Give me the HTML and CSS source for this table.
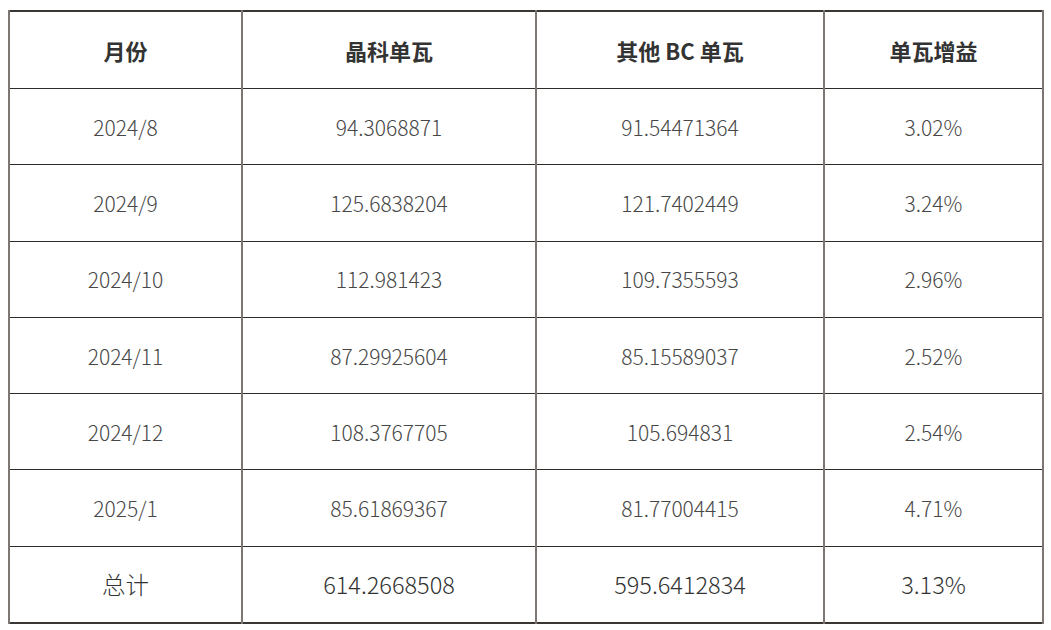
FILE: index.html
```html
<!DOCTYPE html>
<html lang="zh-CN">
<head>
<meta charset="utf-8">
<link rel="stylesheet" href="styles.css">
</head>
<body>
<table class="data">
  <colgroup>
    <col class="c1"><col class="c2"><col class="c3"><col class="c4">
  </colgroup>
  <thead>
    <tr><th>月份</th><th>晶科单瓦</th><th>其他 BC 单瓦</th><th>单瓦增益</th></tr>
  </thead>
  <tbody>
    <tr><td>2024/8</td><td>94.3068871</td><td>91.54471364</td><td>3.02%</td></tr>
    <tr><td>2024/9</td><td>125.6838204</td><td>121.7402449</td><td>3.24%</td></tr>
    <tr><td>2024/10</td><td>112.981423</td><td>109.7355593</td><td>2.96%</td></tr>
    <tr><td>2024/11</td><td>87.29925604</td><td>85.15589037</td><td>2.52%</td></tr>
    <tr><td>2024/12</td><td>108.3767705</td><td>105.694831</td><td>2.54%</td></tr>
    <tr><td>2025/1</td><td>85.61869367</td><td>81.77004415</td><td>4.71%</td></tr>
    <tr class="total"><td>总计</td><td>614.2668508</td><td>595.6412834</td><td>3.13%</td></tr>
  </tbody>
</table>
</body>
</html>
```
FILE: styles.css
```css
html, body {
  margin: 0;
  padding: 0;
  background: #ffffff;
}
body {
  padding: 10px 0 0 8px;
  font-family: "Noto Sans CJK SC", "Noto Sans", sans-serif;
}
.data {
  border-collapse: collapse;
  width: 1034px;
  table-layout: fixed;
  border: 2px solid #3a3633;
}
.c1 { width: 233px; }
.c2 { width: 294px; }
.c3 { width: 288px; }
.c4 { width: 219px; }
.data th, .data td {
  text-align: center;
  vertical-align: middle;
  border-left: 2px solid #7d7672;
  border-right: 2px solid #7d7672;
  border-top: 1.5px solid #2e2b29;
  border-bottom: 1.5px solid #2e2b29;
  padding: 0;
}
.data th {
  height: 76px;
  font-size: 22px;
  font-weight: 700;
  color: #333333;
}
.data td {
  height: 75.3px;
  font-size: 21px;
  font-weight: 300;
  color: #474747;
}
.data tr.total td {
  font-size: 23.5px;
  font-weight: 300;
  color: #333333;
}
```
